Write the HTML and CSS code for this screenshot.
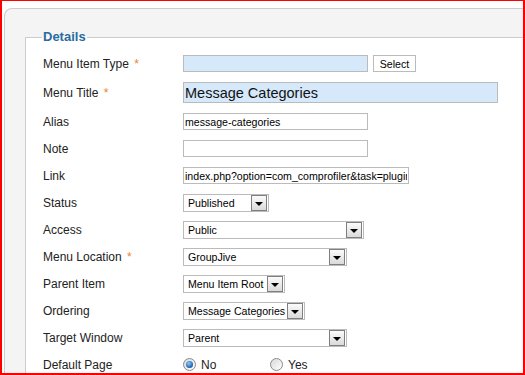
FILE: index.html
```html
<!DOCTYPE html>
<html lang="en">
<head>
    <meta charset="UTF-8">
    <title>Menu Item: Details</title>
    <link rel="stylesheet" href="styles.css">
</head>
<body>
    <div class="frame">
        <div class="panel">
            <fieldset class="details">
                <legend>Details</legend>

                <div class="row">
                    <label>Menu Item Type <span class="star">*</span></label>
                    <div class="control">
                        <input class="text hl w-short" type="text" value="">
                        <button class="btn">Select</button>
                    </div>
                </div>
                <div class="row tall">
                    <label>Menu Title <span class="star">*</span></label>
                    <div class="control">
                        <input class="text hl w-title" type="text" value="Message Categories">
                    </div>
                </div>
                <div class="row">
                    <label>Alias</label>
                    <div class="control">
                        <input class="text w-short" type="text" value="message-categories">
                    </div>
                </div>
                <div class="row">
                    <label>Note</label>
                    <div class="control">
                        <input class="text w-short" type="text" value="">
                    </div>
                </div>
                <div class="row">
                    <label>Link</label>
                    <div class="control">
                        <input class="text w-link" type="text" value="index.php?option=com_comprofiler&amp;task=pluginclass&amp;plugin=cbgroupjive">
                    </div>
                </div>
                <div class="row">
                    <label>Status</label>
                    <div class="control">
                        <div class="select w-status"><span class="value">Published</span><span class="arrow"></span></div>
                    </div>
                </div>
                <div class="row">
                    <label>Access</label>
                    <div class="control">
                        <div class="select w-access"><span class="value">Public</span><span class="arrow"></span></div>
                    </div>
                </div>
                <div class="row">
                    <label>Menu Location <span class="star">*</span></label>
                    <div class="control">
                        <div class="select w-location"><span class="value">GroupJive</span><span class="arrow"></span></div>
                    </div>
                </div>
                <div class="row">
                    <label>Parent Item</label>
                    <div class="control">
                        <div class="select w-parent"><span class="value">Menu Item Root</span><span class="arrow"></span></div>
                    </div>
                </div>
                <div class="row">
                    <label>Ordering</label>
                    <div class="control">
                        <div class="select"><span class="value">Message Categories</span><span class="arrow"></span></div>
                    </div>
                </div>
                <div class="row">
                    <label>Target Window</label>
                    <div class="control">
                        <div class="select w-location"><span class="value">Parent</span><span class="arrow"></span></div>
                    </div>
                </div>
                <div class="row">
                    <label>Default Page</label>
                    <div class="control">
                        <span class="opt"><span class="radio on"></span>No</span>
                        <span class="opt"><span class="radio"></span>Yes</span>
                    </div>
                </div>
            </fieldset>
        </div>
    </div>
</body>
</html>
```

FILE: styles.css
```css
body {
    margin: 0;
    font-family: "Liberation Sans", Arial, sans-serif;
}

.frame {
    width: 525px;
    height: 375px;
    box-sizing: border-box;
    border: 2px solid #ff0000;
    border-top-width: 1px;
    overflow: hidden;
    background: #fff;
}

.panel {
    margin: 7px 0 0 2px;
    height: 420px;
    padding: 20px 0 0 20px;
    background: #f4f4f4;
    border: 1px solid #ccc;
    border-right: none;
    border-radius: 8px 0 0 0;
}

.details {
    margin: 0;
    padding: 5px 0 40px 17px;
    border: 1px solid #ccc;
    border-right: none;
    border-bottom: none;
    background: #fff;
}

legend {
    margin-left: -1px;
    padding: 0 1px;
    font-size: 13px;
    font-weight: bold;
    line-height: 16px;
    color: #2a6aa2;
}

.row {
    display: flex;
    align-items: center;
    height: 27px;
}

.row.tall {
    height: 31px;
}

label {
    width: 140px;
    flex: none;
    font-size: 12px;
    color: #222;
}

.star {
    margin-left: 2px;
    color: #e8862c;
}

.control {
    display: flex;
    align-items: center;
}

.text {
    box-sizing: border-box;
    height: 17px;
    margin: 0;
    padding: 0 1px;
    border: 1px solid #bbb;
    background: #fff;
    font-family: "Liberation Sans", Arial, sans-serif;
    font-size: 10.6px;
    color: #000;
    outline: none;
}

.hl {
    background: #d5e9fb;
}

.w-short {
    width: 185px;
}

.w-link {
    width: 226px;
}

.w-title {
    width: 315px;
    height: 21px;
    font-size: 14.5px;
    color: #111;
}

.btn {
    box-sizing: border-box;
    width: 43px;
    height: 17px;
    margin-left: 5px;
    padding: 0;
    border: 1px solid #bbb;
    background: #fff;
    font-family: "Liberation Sans", Arial, sans-serif;
    font-size: 10.6px;
    color: #000;
}

.select {
    display: flex;
    align-items: center;
    box-sizing: border-box;
    height: 18px;
    padding-left: 4px;
    border: 1px solid #bbb;
    background: #fff;
    font-size: 10.6px;
    color: #000;
}

.select .value {
    flex: 1 0 auto;
    white-space: nowrap;
}

.arrow {
    display: flex;
    flex: none;
    align-items: flex-end;
    justify-content: center;
    box-sizing: border-box;
    width: 16px;
    height: 16px;
    margin-right: 1px;
    margin-left: 2px;
    padding-bottom: 4px;
    border: 1px solid #7f7f7f;
    background: linear-gradient(#fbfbfb, #dadada);
}

.arrow::after {
    content: "";
    border-left: 4px solid transparent;
    border-right: 4px solid transparent;
    border-top: 4px solid #000;
}

.w-status {
    width: 86px;
}

.w-access {
    width: 181px;
}

.w-location {
    width: 164px;
}

.w-parent {
    width: 102px;
}

.opt {
    display: flex;
    align-items: center;
    gap: 5px;
    width: 87px;
    font-size: 12px;
    color: #222;
}

.radio {
    display: inline-flex;
    align-items: center;
    justify-content: center;
    box-sizing: border-box;
    width: 13px;
    height: 13px;
    border: 1px solid #8a8a8a;
    border-radius: 50%;
    background: linear-gradient(135deg, #d8d8d8, #fff);
}

.radio.on::after {
    content: "";
    width: 7px;
    height: 7px;
    border-radius: 50%;
    background: radial-gradient(circle at 40% 35%, #8ccaff, #1b5fa6 70%);
}
```
